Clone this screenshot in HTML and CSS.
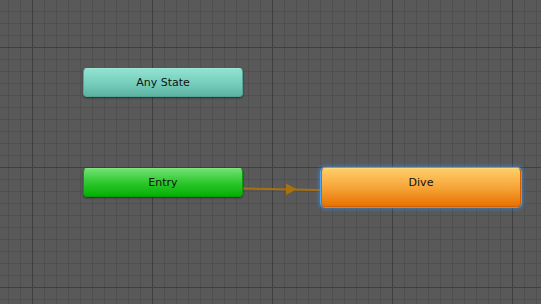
FILE: index.html
```html
<!DOCTYPE html>
<html>
<head>
<meta charset="utf-8">
<link rel="stylesheet" href="styles.css">
</head>
<body>
<div class="graph">
  <svg class="transitions" width="541" height="304" viewBox="0 0 541 304">
    <line x1="243" y1="188.5" x2="321" y2="190" stroke="#a8700f" stroke-width="2"/>
    <polygon points="286,183.5 297,189.3 286,195" fill="#a8700f"/>
  </svg>
  <div class="node node-any">Any State</div>
  <div class="node node-entry">Entry</div>
  <div class="node node-dive">Dive</div>
</div>
</body>
</html>
```
FILE: styles.css
```css
html, body {
  margin: 0;
  padding: 0;
}
body {
  width: 541px;
  height: 304px;
  overflow: hidden;
  background: #595959;
  font-family: "DejaVu Sans", Verdana, sans-serif;
}
.graph {
  position: relative;
  width: 541px;
  height: 304px;
  background-color: #595959;
  background-image:
    linear-gradient(to right, #3f3f3f 0, #3f3f3f 1px, transparent 1px),
    linear-gradient(to bottom, #3f3f3f 0, #3f3f3f 1px, transparent 1px),
    linear-gradient(to right, #505050 0, #505050 1px, transparent 1px),
    linear-gradient(to bottom, #505050 0, #505050 1px, transparent 1px);
  background-size: 120px 120px, 120px 120px, 12px 12px, 12px 12px;
  background-position: 32px 0, 0 47px, 8px 0, 0 11px;
}
.transitions {
  position: absolute;
  left: 0;
  top: 0;
}
.node {
  position: absolute;
  box-sizing: border-box;
  width: 160px;
  height: 29px;
  border-radius: 4px;
  text-align: center;
  font-size: 11px;
  line-height: 28px;
  color: #111;
  box-shadow: 0 1px 2px rgba(0, 0, 0, 0.5);
}
.node-any {
  left: 83px;
  top: 68px;
  background: linear-gradient(to bottom, #90e3d0 0%, #78cfbc 50%, #5db3a3 100%);
  border: 1px solid #55a595;
  border-top-color: #9fe8d6;
}
.node-entry {
  left: 83px;
  top: 168px;
  background: linear-gradient(to bottom, #6fe16f 0%, #2ec82e 50%, #05b005 100%);
  border: 1px solid #0a9a0a;
  border-top-color: #80e580;
}
.node-dive {
  left: 321px;
  top: 168px;
  width: 200px;
  height: 39px;
  background: linear-gradient(to bottom, #ffcd66 0%, #f6a53a 50%, #e87200 100%);
  border: 1px solid #d06000;
  border-top-color: #ffd680;
  box-shadow: 0 0 0 1px #4ea6f2, 0 0 4px 2px rgba(60, 150, 240, 0.55);
}
```
